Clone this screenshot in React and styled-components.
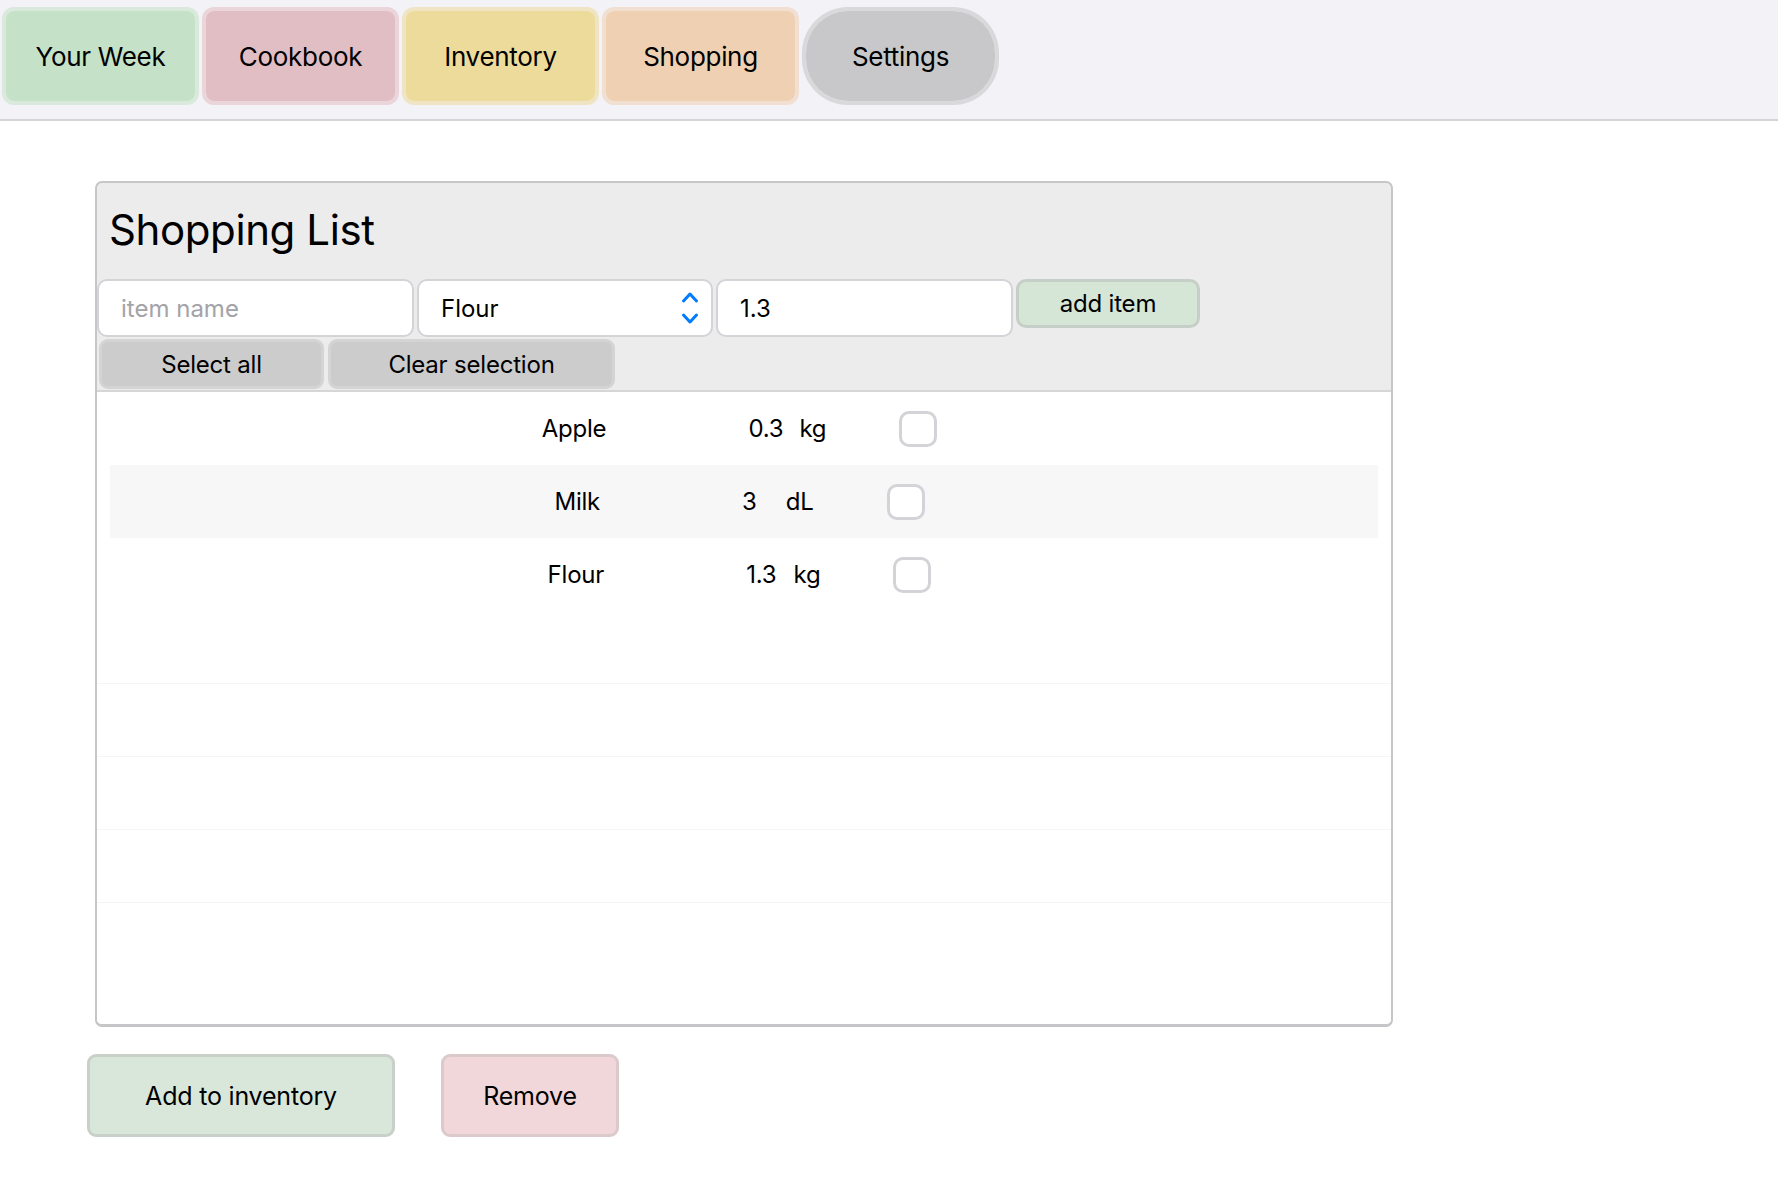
import React from "react";
import styled, { createGlobalStyle } from "styled-components";

const GlobalStyle = createGlobalStyle`
  body {
    margin: 0;
    background: #ffffff;
    font-family: Inter, "Noto Sans", "Liberation Sans", sans-serif;
    color: #000;
  }
  * {
    box-sizing: border-box;
  }
`;

const NavBar = styled.nav`
  display: flex;
  gap: 3px;
  height: 121px;
  padding: 7px 0 0 2px;
  background: #f2f2f7;
  border-bottom: 2px solid #d3d3d8;
`;

const NavButton = styled.div`
  display: flex;
  align-items: center;
  justify-content: center;
  width: 197px;
  height: 98px;
  font-size: 26px;
  letter-spacing: -0.3px;
  background: ${(p) => p.$color};
  background-clip: padding-box;
  border: 4px solid ${(p) => p.$ring};
  border-radius: ${(p) => (p.$pill ? "46px" : "12px")};
`;

const Main = styled.main`
  padding: 60px 0 40px 87px;
`;

const Panel = styled.section`
  display: flex;
  flex-direction: column;
  width: 1298px;
  height: 846px;
  margin-left: 8px;
  background: #ececec;
  border: 2px solid #c6c6c8;
  border-bottom-width: 3px;
  border-radius: 7px;
  overflow: hidden;
`;

const Title = styled.h1`
  margin: 22px 0 24px 12px;
  font-size: 42px;
  line-height: 50px;
  font-weight: 400;
  letter-spacing: -0.4px;
`;

const InputRow = styled.div`
  display: flex;
  align-items: flex-start;
  gap: 3px;
`;

const TextField = styled.input`
  width: ${(p) => p.$w}px;
  height: 58px;
  padding: 0 0 0 22px;
  font-family: inherit;
  font-size: 24px;
  color: #000;
  background: #fff;
  border: 2px solid #d3d3d8;
  border-radius: 10px;
  outline: none;

  &::placeholder {
    color: #a3a3a8;
  }
`;

const SelectBox = styled.div`
  display: flex;
  align-items: center;
  justify-content: space-between;
  width: 296px;
  height: 58px;
  padding: 0 12px 0 22px;
  font-size: 24px;
  background: #fff;
  border: 2px solid #d3d3d8;
  border-radius: 10px;
`;

const SoftButton = styled.div`
  display: flex;
  align-items: center;
  justify-content: center;
  width: ${(p) => p.$w}px;
  height: ${(p) => p.$h}px;
  font-size: ${(p) => p.$size || 24}px;
  letter-spacing: -0.2px;
  background: ${(p) => p.$color};
  border: 3px solid ${(p) => p.$ring};
  border-radius: ${(p) => p.$radius || 9}px;
`;

const SelectionRow = styled.div`
  display: flex;
  gap: 4px;
  margin: 2px 0 1px 2px;
`;

const List = styled.div`
  flex: 1;
  background: #fff;
  border-top: 2px solid #d6d6d6;
`;

const Row = styled.div`
  display: flex;
  align-items: center;
  justify-content: center;
  height: 73px;
  margin: ${(p) => (p.$empty ? "0" : "0 13px")};
  padding-right: ${(p) => (p.$empty ? "0" : "9px")};
  font-size: 24px;
  letter-spacing: -0.2px;
  background: ${(p) => (p.$striped ? "#f7f7f7" : "transparent")};
  border-bottom: ${(p) => (p.$line ? "1px solid #f5f5f5" : "none")};
`;

const Name = styled.span`
  margin-right: 142px;
`;

const Unit = styled.span`
  margin-left: ${(p) => p.$gap}px;
`;

const Check = styled.span`
  width: 38px;
  height: 36px;
  margin-left: 73px;
  background: #fff;
  border: 3px solid #d3d3d8;
  border-radius: 10px;
`;

const ActionRow = styled.div`
  display: flex;
  gap: 46px;
  margin-top: 27px;
`;

const Chevrons = () => (
  <svg width="18" height="38" viewBox="0 0 18 38" fill="none">
    <path
      d="M2.5 12 L9 5 L15.5 12"
      stroke="#007aff"
      strokeWidth="3"
      strokeLinecap="round"
      strokeLinejoin="round"
    />
    <path
      d="M2.5 26 L9 33 L15.5 26"
      stroke="#007aff"
      strokeWidth="3"
      strokeLinecap="round"
      strokeLinejoin="round"
    />
  </svg>
);

const tabs = [
  { label: "Your Week", color: "#c5e1c7", ring: "rgba(197,225,199,0.55)" },
  { label: "Cookbook", color: "#e1bec3", ring: "rgba(225,190,195,0.55)" },
  { label: "Inventory", color: "#eddb9c", ring: "rgba(237,219,156,0.55)" },
  { label: "Shopping", color: "#f0d0b2", ring: "rgba(240,208,178,0.55)" },
  { label: "Settings", color: "#c8c8ca", ring: "rgba(200,200,202,0.6)", pill: true }
];

const items = [
  { name: "Apple", qty: "0.3", unit: "kg", gap: 16 },
  { name: "Milk", qty: "3", unit: "dL", gap: 29 },
  { name: "Flour", qty: "1.3", unit: "kg", gap: 17 }
];

export default function App() {
  return (
    <>
      <GlobalStyle />
      <NavBar>
        {tabs.map((t) => (
          <NavButton key={t.label} $color={t.color} $ring={t.ring} $pill={t.pill}>
            {t.label}
          </NavButton>
        ))}
      </NavBar>
      <Main>
        <Panel>
          <Title>Shopping List</Title>
          <InputRow>
            <TextField $w={317} placeholder="item name" />
            <SelectBox>
              <span>Flour</span>
              <Chevrons />
            </SelectBox>
            <TextField $w={297} defaultValue="1.3" />
            <SoftButton $w={184} $h={49} $color="#d5e5d6" $ring="#c6cfc7" $radius={10}>
              add item
            </SoftButton>
          </InputRow>
          <SelectionRow>
            <SoftButton $w={225} $h={50} $color="#cccccc" $ring="#d4d4d4">
              Select all
            </SoftButton>
            <SoftButton $w={287} $h={50} $color="#cccccc" $ring="#d4d4d4">
              Clear selection
            </SoftButton>
          </SelectionRow>
          <List>
            {items.map((it, i) => (
              <Row key={it.name} $striped={i % 2 === 1}>
                <Name>{it.name}</Name>
                <span>{it.qty}</span>
                <Unit $gap={it.gap}>{it.unit}</Unit>
                <Check />
              </Row>
            ))}
            {[0, 1, 2, 3, 4].map((n) => (
              <Row key={"empty" + n} $empty $line={n < 4} />
            ))}
          </List>
        </Panel>
        <ActionRow>
          <SoftButton $w={308} $h={83} $size={25} $color="#d8e7da" $ring="#c8d0c9">
            Add to inventory
          </SoftButton>
          <SoftButton $w={178} $h={83} $size={25} $color="#f2d7da" $ring="#dacacb">
            Remove
          </SoftButton>
        </ActionRow>
      </Main>
    </>
  );
}
